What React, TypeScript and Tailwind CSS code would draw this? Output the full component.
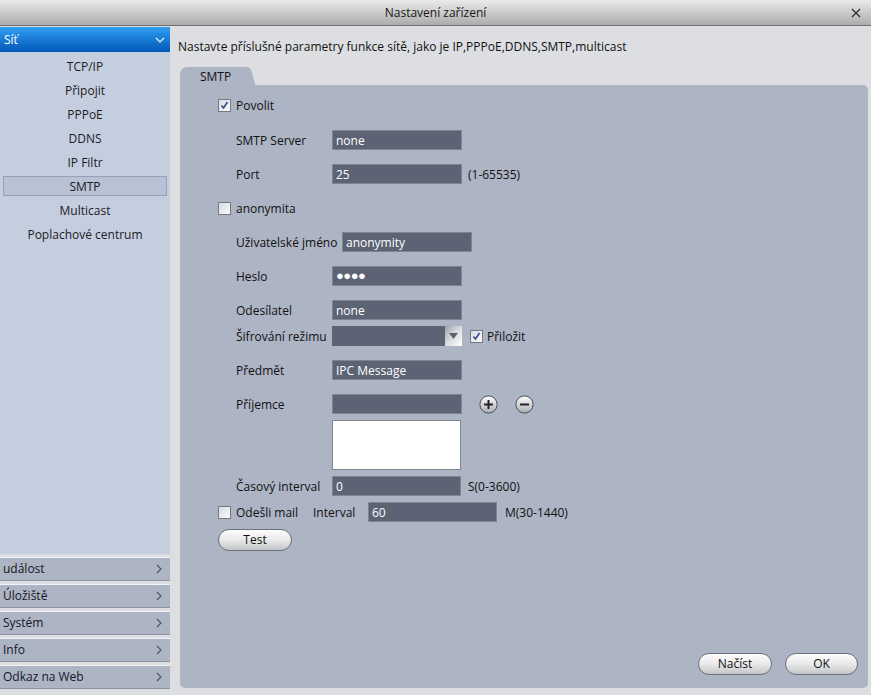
import React from 'react';

const font = { fontFamily: '"Open Sans", "Liberation Sans", sans-serif' };

const netItems = ['TCP/IP', 'Připojit', 'PPPoE', 'DDNS', 'IP Filtr', 'SMTP', 'Multicast', 'Poplachové centrum'];
const groups = ['událost', 'Úložiště', 'Systém', 'Info', 'Odkaz na Web'];

function Checkbox({ checked }: { checked?: boolean }) {
  return (
    <div className="w-[13px] h-[13px] shrink-0 border border-[#737985] bg-gradient-to-br from-[#d9dbe0] to-[#fbfbfc] flex items-center justify-center">
      {checked && (
        <svg width="9" height="9" viewBox="0 0 9 9">
          <path d="M1.5 4.5 L3.5 7 L7.5 1" fill="none" stroke="#344796" strokeWidth="1.6" />
        </svg>
      )}
    </div>
  );
}

function Field({ value, w = 'w-[130px]', dots }: { value?: string; w?: string; dots?: boolean }) {
  return (
    <div className={`${w} h-[20px] shrink-0 bg-[#5b6374] border border-[#7f858f] flex items-center px-[3px] text-white text-[12px]`}>
      {dots ? <span className="text-[13px] tracking-[-0.5px]">●●●●</span> : <span className="pt-[1px]">{value}</span>}
    </div>
  );
}

function Row({ label, lw = 'w-[96px]', children, mt }: { label: string; lw?: string; children: React.ReactNode; mt: string }) {
  return (
    <div className={`flex items-center h-[20px] ml-[18px] ${mt}`}>
      <span className={`${lw} shrink-0 pt-[2px]`}>{label}</span>
      {children}
    </div>
  );
}

function RoundIcon({ minus }: { minus?: boolean }) {
  return (
    <svg width="19" height="19" viewBox="0 0 19 19">
      <defs>
        <linearGradient id={minus ? 'gm' : 'gp'} x1="0" y1="0" x2="0" y2="1">
          <stop offset="0" stopColor="#ffffff" />
          <stop offset="1" stopColor="#a9acb2" />
        </linearGradient>
      </defs>
      <circle cx="9.5" cy="9.5" r="8.6" fill={`url(#${minus ? 'gm' : 'gp'})`} stroke="#4a4d53" strokeWidth="1" />
      <path d="M5 9.5 H14" stroke="#222" strokeWidth="2" />
      {!minus && <path d="M9.5 5 V14" stroke="#222" strokeWidth="2" />}
    </svg>
  );
}

function PillButton({ label, w }: { label: string; w: string }) {
  return (
    <button className={`${w} h-[22px] rounded-full border border-[#6c7078] bg-gradient-to-b from-[#fdfdfd] via-[#e9e9e9] to-[#c3c5c9] text-[12px] text-[#111] flex items-center justify-center`}>
      {label}
    </button>
  );
}

export default function App() {
  return (
    <div className="w-[871px] h-[695px] flex flex-col bg-[#dcdee2] text-[12px] text-[#111] overflow-hidden" style={font}>
      {/* title bar */}
      <div className="h-[26px] shrink-0 relative flex items-center justify-center bg-gradient-to-b from-[#ebebeb] to-[#acacac] border-b border-[#6f6f6f]">
        <span className="text-[12px] text-[#161616]">Nastavení zařízení</span>
        <svg className="absolute right-[10px] top-[8px]" width="10" height="10" viewBox="0 0 10 10">
          <path d="M1 1 L9 9 M9 1 L1 9" stroke="#333" strokeWidth="1.4" />
        </svg>
      </div>

      <div className="flex flex-1 min-h-0">
        {/* sidebar */}
        <div className="w-[170px] shrink-0 flex flex-col pt-[1px] pb-[6px]">
          <div className="h-[25px] shrink-0 flex items-center justify-between pl-[4px] pr-[5px] bg-gradient-to-b from-[#2f9ff2] to-[#0358b8] text-white">
            <span>Síť</span>
            <svg width="10" height="6" viewBox="0 0 10 6">
              <path d="M1 1 L5 5 L9 1" fill="none" stroke="#e8f2ff" strokeWidth="1.2" />
            </svg>
          </div>
          <div className="flex-1 bg-[#c5cede] pt-[2px] flex flex-col">
            {netItems.map((it) => (
              <div key={it} className="h-[24px] flex items-center px-[3px] text-[#1b1c26]">
                <div className={`w-full h-[20px] flex items-center justify-center pt-[1px] ${it === 'SMTP' ? 'bg-[#b8c2d4] border border-[#96a1b6]' : ''}`}>
                  {it}
                </div>
              </div>
            ))}
          </div>
          {groups.map((g) => (
            <div key={g} className="mt-[3px] h-[24px] shrink-0 bg-[#adb4c4] border-t border-[#f1f3f6] border-b border-b-[#8b92a1] flex items-center justify-between pl-[3px] pr-[8px] text-[#16171f]">
              <span>{g}</span>
              <svg width="6" height="10" viewBox="0 0 6 10">
                <path d="M1 1 L5 5 L1 9" fill="none" stroke="#4d5260" strokeWidth="1.1" />
              </svg>
            </div>
          ))}
        </div>

        {/* main */}
        <div className="flex-1 flex flex-col pl-[10px] pr-[3px] pb-[7px]">
          <div className="pt-[13px] leading-[16px] -ml-[2px] text-[#111]">
            Nastavte příslušné parametry funkce sítě, jako je IP,PPPoE,DDNS,SMTP,multicast
          </div>
          <div className="mt-[12px] flex h-[18px] shrink-0">
            <div className="w-[66px] bg-[#adb4c4] rounded-tl-[7px] pl-[20px] pt-[1px] flex items-center">SMTP</div>
            <svg width="10" height="18" viewBox="0 0 10 18">
              <path d="M0 0 H1 C3.5 0 4.5 1.5 5.5 4.5 L8.5 15 C9 17 9.5 18 10 18 H0 Z" fill="#adb4c4" />
            </svg>
          </div>
          <div className="flex-1 bg-[#adb4c4] rounded-b-[5px] rounded-tr-[5px] flex flex-col pl-[38px] pt-[10px]">
            <div className="flex items-center h-[20px] gap-[5px]">
              <Checkbox checked />
              <span className="pt-[2px]">Povolit</span>
            </div>
            <Row label="SMTP Server" mt="mt-[15px]">
              <Field value="none" />
            </Row>
            <Row label="Port" mt="mt-[14px]">
              <Field value="25" />
              <span className="ml-[6px] pt-[2px]">(1-65535)</span>
            </Row>
            <div className="flex items-center h-[20px] gap-[5px] mt-[14px]">
              <Checkbox />
              <span className="pt-[2px]">anonymita</span>
            </div>
            <Row label="Uživatelské jméno" lw="w-[106px]" mt="mt-[14px]">
              <Field value="anonymity" />
            </Row>
            <Row label="Heslo" mt="mt-[14px]">
              <Field dots />
            </Row>
            <Row label="Odesílatel" mt="mt-[14px]">
              <Field value="none" />
            </Row>
            <Row label="Šifrování režimu" mt="mt-[6px]">
              <div className="w-[130px] h-[20px] shrink-0 flex bg-[#5b6374]">
                <div className="flex-1" />
                <div className="w-[17px] h-full bg-gradient-to-br from-[#9aa0aa] via-[#dcdde0] to-[#ffffff] flex items-center justify-center">
                  <svg width="9" height="6" viewBox="0 0 9 6">
                    <path d="M0 0 H9 L4.5 6 Z" fill="#5e636c" />
                  </svg>
                </div>
              </div>
              <div className="ml-[8px] flex items-center gap-[4px]">
                <Checkbox checked />
                <span className="pt-[2px]">Přiložit</span>
              </div>
            </Row>
            <Row label="Předmět" mt="mt-[14px]">
              <Field value="IPC Message" />
            </Row>
            <Row label="Příjemce" mt="mt-[14px]">
              <Field />
              <div className="ml-[17px] flex items-center gap-[17px]">
                <RoundIcon />
                <RoundIcon minus />
              </div>
            </Row>
            <div className="ml-[114px] mt-[6px] w-[129px] h-[50px] bg-white border border-[#80868f]" />
            <Row label="Časový interval" mt="mt-[6px]">
              <Field value="0" w="w-[129px]" />
              <span className="ml-[7px] pt-[2px]">S(0-3600)</span>
            </Row>
            <div className="flex items-center h-[20px] mt-[6px]">
              <Checkbox />
              <span className="ml-[5px] w-[77px] pt-[2px]">Odešli mail</span>
              <span className="w-[55px] pt-[2px]">Interval</span>
              <Field value="60" w="w-[129px]" />
              <span className="ml-[8px] pt-[2px]">M(30-1440)</span>
            </div>
            <div className="mt-[7px]">
              <PillButton label="Test" w="w-[74px]" />
            </div>
            <div className="mt-auto flex justify-end gap-[13px] pr-[10px] pb-[13px]">
              <PillButton label="Načíst" w="w-[74px]" />
              <PillButton label="OK" w="w-[73px]" />
            </div>
          </div>
        </div>
      </div>
    </div>
  );
}
